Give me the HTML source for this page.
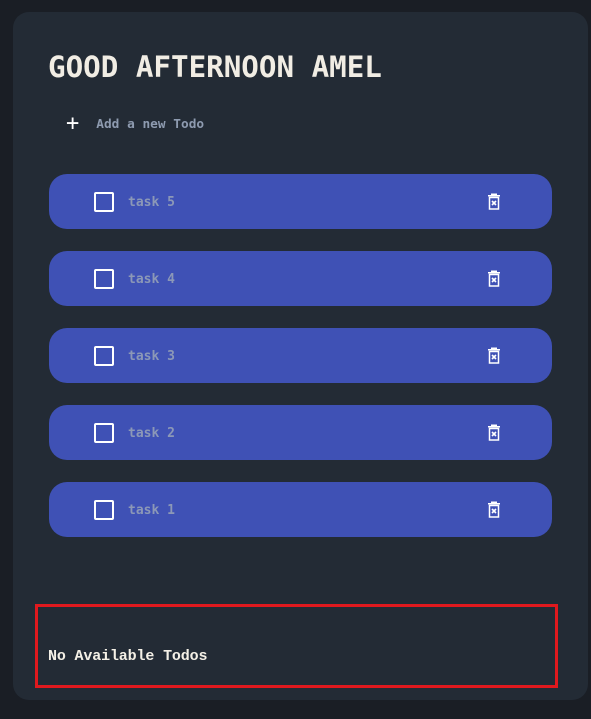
<!DOCTYPE html>
<html><head><meta charset="utf-8"><style>
*{margin:0;padding:0;box-sizing:border-box}
body{width:591px;height:719px;background:#1a1e25;font-family:"DejaVu Sans Mono","Liberation Mono",monospace;overflow:hidden;position:relative}
.card{position:absolute;left:13px;top:12px;width:575px;height:688px;background:#232b35;border-radius:16px}
h1{position:absolute;left:48px;top:49px;font-size:29.2px;font-weight:bold;color:#f1ede4;line-height:36px}
.add{position:absolute;left:66px;top:114px;height:20px;display:flex;align-items:center;color:#8e9bb0;font-size:12.8px;font-weight:bold}
.add .plus{color:#fff;font-size:22px;font-weight:normal;margin-right:17px;line-height:20px}
.item{position:absolute;left:49px;width:503px;height:55px;background:#3f51b5;border-radius:18px}
.cb{position:absolute;left:45px;top:18px;width:20px;height:20px;border:2px solid #fff;border-radius:2px}
.t{position:absolute;left:79px;top:20px;color:#8c98b7;font-size:13px;font-weight:bold;line-height:18px}
.tr{position:absolute;left:438px;top:19px}
.box{position:absolute;left:35px;top:604px;width:523px;height:84px;border:3px solid #e0191e}
.box span{position:absolute;left:10px;top:41px;color:#f4f0e6;font-weight:bold;font-size:15px;font-family:"Liberation Mono","DejaVu Sans Mono",monospace;letter-spacing:-0.15px}
</style></head><body>
<div class="card"></div>
<h1>GOOD AFTERNOON AMEL</h1>
<div class="add"><span class="plus">+</span>Add a new Todo</div>
<div class="item" style="top:174px"><div class="cb"></div><div class="t">task 5</div><svg class="tr" width="14" height="17" viewBox="0 0 14 17"><rect x="4" y="0.5" width="6" height="1.5" fill="#fff"/><rect x="1" y="2" width="12" height="1.5" fill="#fff"/><rect x="2.5" y="4.5" width="9" height="11.5" fill="none" stroke="#fff" stroke-width="1.5"/><path d="M5 8l4 4M9 8l-4 4" stroke="#fff" stroke-width="1.6"/></svg></div>
<div class="item" style="top:251px"><div class="cb"></div><div class="t">task 4</div><svg class="tr" width="14" height="17" viewBox="0 0 14 17"><rect x="4" y="0.5" width="6" height="1.5" fill="#fff"/><rect x="1" y="2" width="12" height="1.5" fill="#fff"/><rect x="2.5" y="4.5" width="9" height="11.5" fill="none" stroke="#fff" stroke-width="1.5"/><path d="M5 8l4 4M9 8l-4 4" stroke="#fff" stroke-width="1.6"/></svg></div>
<div class="item" style="top:328px"><div class="cb"></div><div class="t">task 3</div><svg class="tr" width="14" height="17" viewBox="0 0 14 17"><rect x="4" y="0.5" width="6" height="1.5" fill="#fff"/><rect x="1" y="2" width="12" height="1.5" fill="#fff"/><rect x="2.5" y="4.5" width="9" height="11.5" fill="none" stroke="#fff" stroke-width="1.5"/><path d="M5 8l4 4M9 8l-4 4" stroke="#fff" stroke-width="1.6"/></svg></div>
<div class="item" style="top:405px"><div class="cb"></div><div class="t">task 2</div><svg class="tr" width="14" height="17" viewBox="0 0 14 17"><rect x="4" y="0.5" width="6" height="1.5" fill="#fff"/><rect x="1" y="2" width="12" height="1.5" fill="#fff"/><rect x="2.5" y="4.5" width="9" height="11.5" fill="none" stroke="#fff" stroke-width="1.5"/><path d="M5 8l4 4M9 8l-4 4" stroke="#fff" stroke-width="1.6"/></svg></div>
<div class="item" style="top:482px"><div class="cb"></div><div class="t">task 1</div><svg class="tr" width="14" height="17" viewBox="0 0 14 17"><rect x="4" y="0.5" width="6" height="1.5" fill="#fff"/><rect x="1" y="2" width="12" height="1.5" fill="#fff"/><rect x="2.5" y="4.5" width="9" height="11.5" fill="none" stroke="#fff" stroke-width="1.5"/><path d="M5 8l4 4M9 8l-4 4" stroke="#fff" stroke-width="1.6"/></svg></div>
<div class="box"><span>No Available Todos</span></div>
</body></html>
